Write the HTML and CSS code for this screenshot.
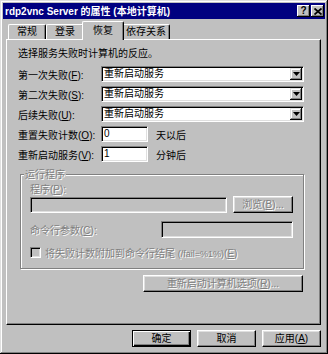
FILE: index.html
```html
<!DOCTYPE html>
<html lang="zh-CN">
<head>
    <meta charset="UTF-8">
    <meta name="viewport" content="width=device-width, initial-scale=1.0">
    <title>rdp2vnc Server 的属性</title>
    <link rel="stylesheet" href="styles.css">
</head>
<body>
    <div class="window">
        <!-- Barra de título -->
        <div class="titlebar">
            <span class="title">rdp2vnc Server 的属性 (本地计算机)</span>
            <div class="title-buttons">
                <span class="tbtn">?</span>
                <span class="tbtn">
                    <svg width="8" height="7" viewBox="0 0 8 7"><path d="M0.5 0.5 7.5 6.5 M7.5 0.5 0.5 6.5" stroke="#000" stroke-width="1.8"/></svg>
                </span>
            </div>
        </div>

        <!-- Abas -->
        <div class="tabs">
            <div class="tab">常规</div>
            <div class="tab">登录</div>
            <div class="tab active">恢复</div>
            <div class="tab wide">依存关系</div>
        </div>

        <div class="panel">
            <p class="intro">选择服务失败时计算机的反应。</p>

            <div class="row first">
                <label>第一次失败(<u>F</u>):</label>
                <div class="combo"><span>重新启动服务</span><span class="drop"><svg width="7" height="4"><polygon points="0,0 7,0 3.5,4"/></svg></span></div>
            </div>
            <div class="row">
                <label>第二次失败(<u>S</u>):</label>
                <div class="combo"><span>重新启动服务</span><span class="drop"><svg width="7" height="4"><polygon points="0,0 7,0 3.5,4"/></svg></span></div>
            </div>
            <div class="row">
                <label>后续失败(<u>U</u>):</label>
                <div class="combo"><span>重新启动服务</span><span class="drop"><svg width="7" height="4"><polygon points="0,0 7,0 3.5,4"/></svg></span></div>
            </div>
            <div class="row">
                <label>重置失败计数(<u>O</u>):</label>
                <div class="edit small">0</div>
                <span class="unit">天以后</span>
            </div>
            <div class="row">
                <label>重新启动服务(<u>V</u>):</label>
                <div class="edit small">1</div>
                <span class="unit">分钟后</span>
            </div>

            <fieldset class="group">
                <legend class="dis">运行程序</legend>
                <div class="glabel dis">程序(<u>P</u>):</div>
                <div class="grow">
                    <div class="edit off prog"></div>
                    <div class="btn browse dis">浏览(<u>B</u>)...</div>
                </div>
                <div class="grow args">
                    <span class="dis">命令行参数(<u>C</u>):</span>
                    <div class="edit off argbox"></div>
                </div>
                <div class="check-row">
                    <span class="checkbox"></span>
                    <span class="dis">将失败计数附加到命令行结尾 <small>(/fail=%1%)</small>(<u>E</u>)</span>
                </div>
            </fieldset>

            <div class="btn restart dis">重新启动计算机选项(<u>R</u>)...</div>
        </div>

        <div class="actions">
            <div class="btn default">确定</div>
            <div class="btn">取消</div>
            <div class="btn">应用(<u>A</u>)</div>
        </div>
    </div>
</body>
</html>
```

FILE: styles.css
```css
body {
    margin: 0;
    font-family: "Liberation Sans", "Noto Sans CJK SC", sans-serif;
    font-size: 10px;
    color: #000;
    white-space: nowrap;
}

.window {
    box-sizing: border-box;
    width: 328px;
    height: 354px;
    padding: 3px;
    background: #c0c0c0;
    display: flex;
    flex-direction: column;
    box-shadow: inset -1px -1px #000, inset 1px 1px #dfdfdf, inset -2px -2px #808080, inset 2px 2px #fff;
}

.titlebar {
    height: 16px;
    background: #000080;
    color: #fff;
    font-weight: bold;
    display: flex;
    align-items: center;
    justify-content: space-between;
    padding: 0 1px 0 2px;
    line-height: 13px;
}

.title-buttons {
    display: flex;
    gap: 1px;
}

.tbtn {
    box-sizing: border-box;
    width: 13px;
    height: 12px;
    background: #c0c0c0;
    color: #000;
    font-size: 10px;
    font-weight: bold;
    line-height: 10px;
    display: flex;
    align-items: center;
    justify-content: center;
    box-shadow: inset -1px -1px #000, inset 1px 1px #fff, inset -2px -2px #808080;
}

/* abas */
.tabs {
    display: flex;
    align-items: flex-end;
    height: 18px;
    margin: 2px 4px 0 5px;
}

.tab {
    box-sizing: border-box;
    width: 38px;
    height: 15px;
    line-height: 14px;
    text-align: center;
    border-top: 1px solid #fff;
    border-left: 1px solid #fff;
    border-right: 1px solid #000;
    border-radius: 2px 2px 0 0;
    box-shadow: inset -1px 0 #808080;
    background: #c0c0c0;
}

.tab.wide {
    width: 48px;
}

.tab.active {
    position: relative;
    z-index: 1;
    width: 42px;
    height: 19px;
    margin: 0 -2px -1px -2px;
    line-height: 17px;
}

.panel {
    flex: 1;
    margin: 0 4px 0 3px;
    padding: 1px 16px 0 11px;
    border-top: 1px solid #fff;
    border-left: 1px solid #fff;
    border-right: 1px solid #000;
    border-bottom: 1px solid #000;
    box-shadow: inset -1px -1px #808080;
    display: flex;
    flex-direction: column;
}

.intro {
    margin: 6px 0 0;
    line-height: 13px;
}

.row {
    display: flex;
    align-items: center;
    height: 16px;
    margin-top: 4px;
}

.row.first {
    margin-top: 6px;
}

.row label {
    width: 83px;
    flex-shrink: 0;
}

.combo,
.edit {
    box-sizing: border-box;
    height: 16px;
    background: #fff;
    border: 1px solid;
    border-color: #808080 #fff #fff #808080;
    box-shadow: inset 1px 1px #000, inset -1px -1px #dfdfdf;
    display: flex;
    align-items: center;
    line-height: 12px;
}

.combo {
    flex: 1;
    padding: 0 1px 0 2px;
}

.drop {
    margin-left: auto;
    box-sizing: border-box;
    width: 12px;
    height: 12px;
    background: #c0c0c0;
    box-shadow: inset -1px -1px #000, inset 1px 1px #dfdfdf, inset -2px -2px #808080, inset 2px 2px #fff;
    display: flex;
    align-items: center;
    justify-content: center;
}

.edit.small {
    width: 47px;
    padding-left: 2px;
}

.unit {
    margin-left: 8px;
}

.dis {
    color: #808080;
    text-shadow: 1px 1px 0 #fff;
}

.dis small {
    font-size: 9px;
}

.group {
    margin: 6px 0 0 2px;
    padding: 2px 10px 9px 9px;
    min-width: 0;
    border: 1px solid #808080;
    box-shadow: inset 1px 1px #fff, 1px 1px #fff;
}

.group legend {
    margin-left: -6px;
    padding: 0 1px;
    line-height: 13px;
    background: #c0c0c0;
}

.glabel {
    line-height: 13px;
}

.grow {
    display: flex;
    align-items: flex-start;
    height: 17px;
}

.edit.off {
    background: #c0c0c0;
}

.edit.prog {
    width: 197px;
    margin-top: 1px;
}

.grow.args {
    margin-top: 8px;
    align-items: center;
}

.edit.argbox {
    width: 132px;
    height: 17px;
    margin-left: auto;
}

.check-row {
    display: flex;
    align-items: center;
    height: 13px;
    margin-top: 8px;
}

.checkbox {
    box-sizing: border-box;
    width: 11px;
    height: 11px;
    margin-right: 4px;
    border: 1px solid;
    border-color: #808080 #fff #fff #808080;
    box-shadow: inset 1px 1px #000, inset -1px -1px #dfdfdf;
    background: #c0c0c0;
}

.btn {
    box-sizing: border-box;
    height: 17px;
    background: #c0c0c0;
    border: 1px solid;
    border-color: #fff #000 #000 #fff;
    box-shadow: inset -1px -1px #808080, inset 1px 1px #dfdfdf;
    display: flex;
    align-items: center;
    justify-content: center;
    line-height: 13px;
}

.btn.browse {
    width: 60px;
    margin-left: 6px;
}

.btn.restart {
    align-self: flex-end;
    width: 160px;
    margin: 6px 1px 0 0;
}

.actions {
    display: flex;
    justify-content: flex-end;
    gap: 6px;
    margin: 5px 4px 4px 0;
}

.actions .btn {
    width: 59px;
}

.btn.default {
    border-color: #000;
    box-shadow: inset 1px 1px #fff, inset -1px -1px #000, inset -2px -2px #808080;
}
```
